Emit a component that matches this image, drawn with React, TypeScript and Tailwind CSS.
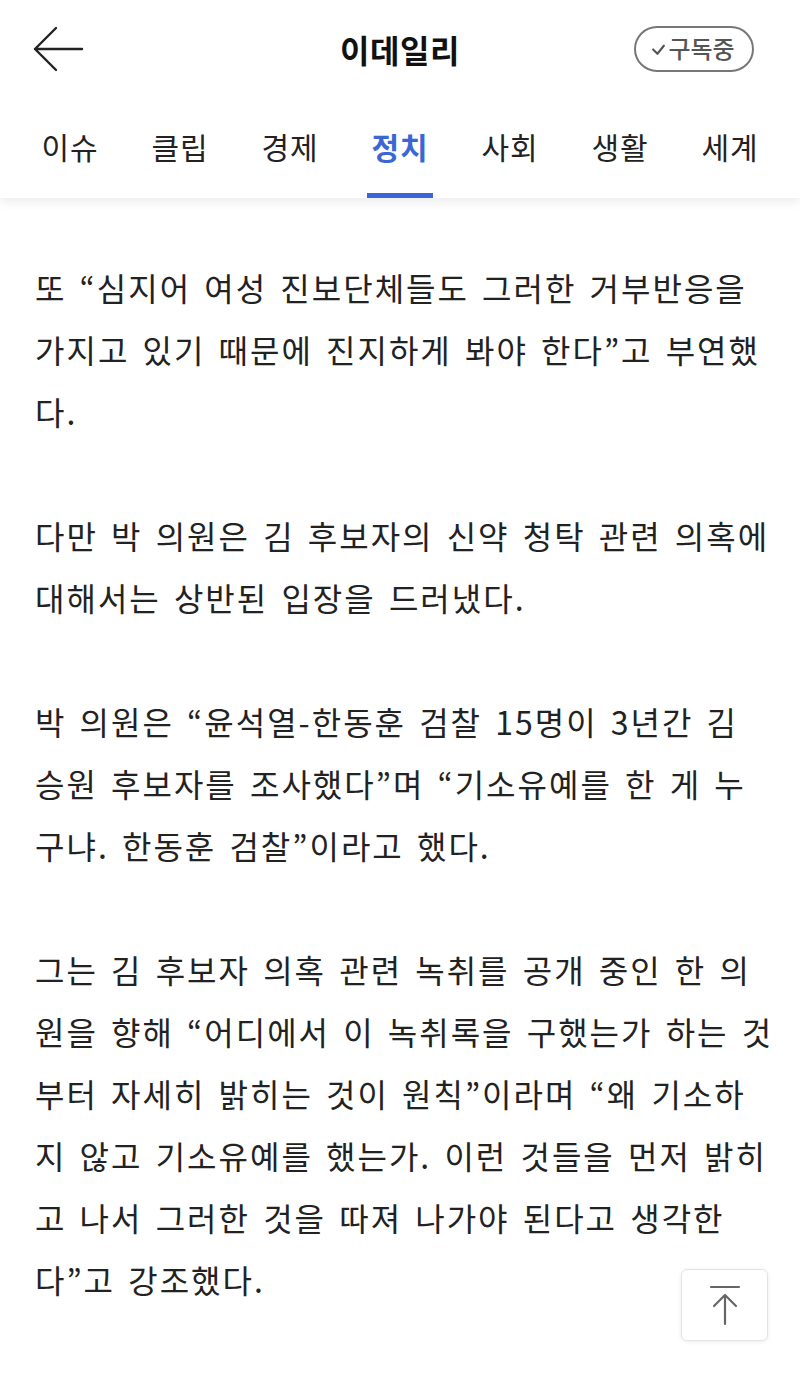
import React from "react";

const tabs = ["이슈", "클립", "경제", "정치", "사회", "생활", "세계"];

const paragraphs: string[][] = [
  [
    "또 “심지어 여성 진보단체들도 그러한 거부반응을",
    "가지고 있기 때문에 진지하게 봐야 한다”고 부연했",
    "다.",
  ],
  ["다만 박 의원은 김 후보자의 신약 청탁 관련 의혹에", "대해서는 상반된 입장을 드러냈다."],
  [
    "박 의원은 “윤석열-한동훈 검찰 15명이 3년간 김",
    "승원 후보자를 조사했다”며 “기소유예를 한 게 누",
    "구냐. 한동훈 검찰”이라고 했다.",
  ],
  [
    "그는 김 후보자 의혹 관련 녹취를 공개 중인 한 의",
    "원을 향해 “어디에서 이 녹취록을 구했는가 하는 것",
    "부터 자세히 밝히는 것이 원칙”이라며 “왜 기소하",
    "지 않고 기소유예를 했는가. 이런 것들을 먼저 밝히",
    "고 나서 그러한 것을 따져 나가야 된다고 생각한",
    "다”고 강조했다.",
  ],
];

export default function App() {
  return (
    <div
      className="relative w-[800px] h-[1390px] bg-white overflow-hidden text-[#222]"
      style={{ fontFamily: '"Noto Sans CJK KR", "Noto Sans", sans-serif' }}
    >
      {/* Header */}
      <div className="relative z-10 bg-white shadow-[0_4px_10px_rgba(0,0,0,0.08)]">
        <div className="flex items-center h-[98px] pl-[32px] pr-[46px]">
          <div className="w-[120px] flex items-center">
            <svg width="52" height="46" viewBox="0 0 52 46" fill="none">
              <path d="M50 23H3M24 2L3 23L24 44" stroke="#222" strokeWidth="2.4" strokeLinecap="round" strokeLinejoin="round" />
            </svg>
          </div>
          <div className="flex-1 text-center text-[32px] font-bold tracking-[0.5px] text-[#111] pl-[14px]">이데일리</div>
          <div className="w-[120px] flex justify-end">
            <div className="flex items-center justify-center w-[120px] h-[46px] rounded-full border-2 border-[#777] text-[24px] text-[#555] font-medium gap-[2px] pr-[2px]">
              <svg width="15" height="13" viewBox="0 0 14 12" fill="none">
                <path d="M2 6L6 10L12 2.5" stroke="#555" strokeWidth="2" strokeLinecap="round" strokeLinejoin="round" />
              </svg>
              <span className="leading-none -mt-[2px]">구독중</span>
            </div>
          </div>
        </div>
        <div className="flex h-[100px] pl-[15px]">
          {tabs.map((t) => {
            const active = t === "정치";
            return (
              <div key={t} className="relative w-[110px] flex items-center justify-center">
                <span
                  className={
                    active
                      ? "text-[30px] font-bold tracking-[1px] text-[#3c66d6] -mt-[4px]"
                      : "text-[30px] tracking-[1px] text-[#222] -mt-[4px]"
                  }
                >
                  {t}
                </span>
                {active && <div className="absolute bottom-0 left-1/2 -translate-x-1/2 w-[66px] h-[5px] bg-[#3c66d6]" />}
              </div>
            );
          })}
        </div>
      </div>

      {/* Body */}
      <div className="px-[35px] pt-[58px] text-[32px] leading-[62px] tracking-[2px] [word-spacing:4px] text-[#222]">
        {paragraphs.map((p, i) => (
          <p key={i} className={i > 0 ? "mt-[62px]" : ""}>
            {p.map((line, j) => (
              <span key={j} className="block whitespace-nowrap">
                {line}
              </span>
            ))}
          </p>
        ))}
      </div>

      {/* Scroll to top */}
      <div className="absolute left-[681px] top-[1269px] w-[87px] h-[72px] bg-white border border-[#e3e3e3] rounded-[6px] shadow-[0_1px_4px_rgba(0,0,0,0.08)] flex items-center justify-center">
        <svg width="34" height="42" viewBox="0 0 34 42" fill="none">
          <path d="M3 3H31M17 11V40M6 22L17 11L28 22" stroke="#666" strokeWidth="2.2" strokeLinecap="round" strokeLinejoin="round" />
        </svg>
      </div>
    </div>
  );
}
